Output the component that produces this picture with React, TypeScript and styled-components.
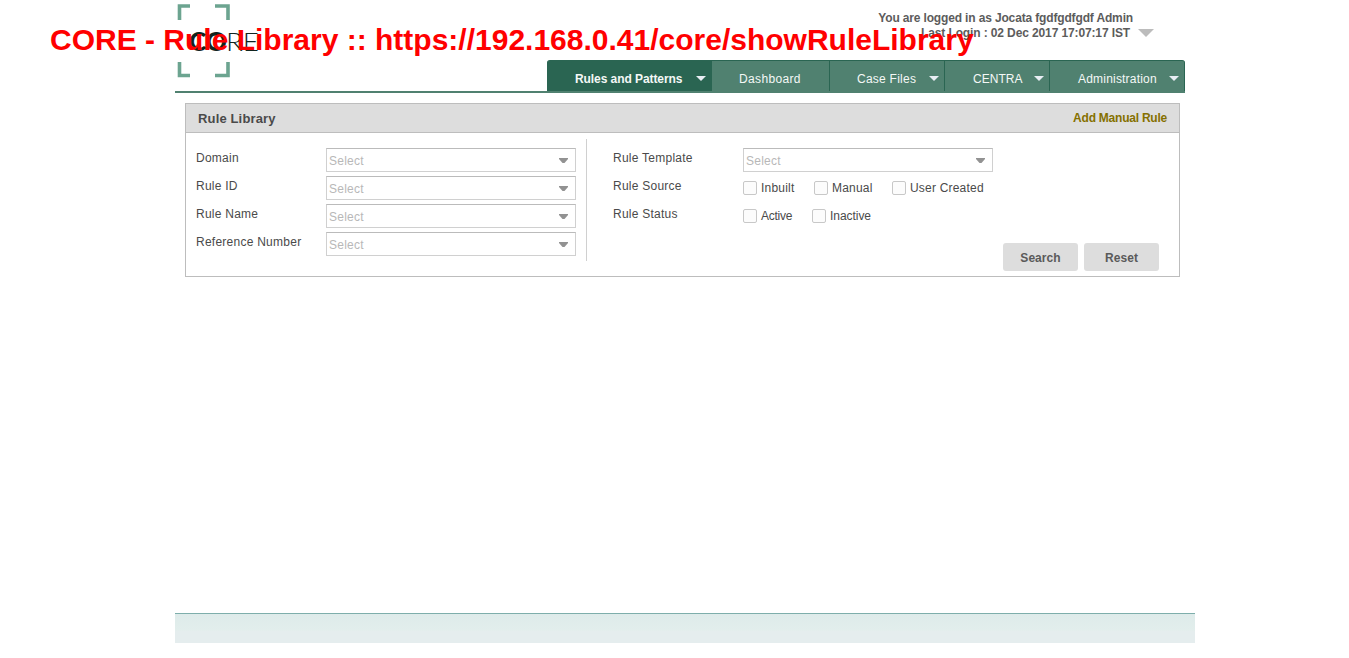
import React from "react";
import styled, { createGlobalStyle } from "styled-components";

const GlobalStyle = createGlobalStyle`
  * { box-sizing: border-box; }
  body { margin: 0; background: #fff; color: #4a4a4a; font: 12px/14px Arial, "Liberation Sans", sans-serif; letter-spacing: 0.25px; }
`;
const Page = styled.div`
  width: 1020px;
  height: 658px;
  margin-left: 175px;
  display: flex;
  flex-direction: column;
`;
const Header = styled.header`
  width: 1010px;
  height: 93px;
  display: flex;
  justify-content: space-between;
  border-bottom: 2px solid #508170;
`;
const Logo = styled.svg`
  display: block;
  width: 90px;
  height: 80px;
`;
const HeaderRight = styled.div`
  width: 638px;
  display: flex;
  flex-direction: column;
  justify-content: space-between;
`;
const UserInfo = styled.div`
  display: flex;
  justify-content: flex-end;
  padding: 11px 31px 0 0;
  font-weight: bold;
  line-height: 15px;
  color: #5c5c5c;
`;
const UserLines = styled.div`
  display: flex;
  flex-direction: column;
  align-items: flex-end;
`;
const UserLine = styled.span<{ $inset?: number; $spacing: number }>`
  white-space: nowrap;
  margin-right: ${(p) => p.$inset ?? 0}px;
  letter-spacing: ${(p) => p.$spacing}px;
`;
const Arrow = styled.span<{ $half: number; $height: number; $color: string }>`
  flex: none;
  width: 0;
  height: 0;
  border: solid transparent;
  border-width: ${(p) => `${p.$height}px ${p.$half}px 0`};
  border-top-color: ${(p) => p.$color};
`;
const UserArrow = styled(Arrow)`
  margin-top: 18px;
`;
const Nav = styled.nav`
  display: flex;
  height: 31px;
  border-top: 1px solid #2a6552;
  border-radius: 3px 3px 0 0;
  background: #508170;
  overflow: hidden;
`;
const Tab = styled.a<{ $width: number; $pad: number; $active?: boolean; $spacing?: number }>`
  display: flex;
  justify-content: space-between;
  align-items: center;
  width: ${(p) => p.$width}px;
  padding: 5px 5px 0 ${(p) => p.$pad}px;
  color: #f4f8f6;
  font-weight: ${(p) => (p.$active ? "bold" : "normal")};
  letter-spacing: ${(p) => p.$spacing ?? 0.25}px;
  background: ${(p) => (p.$active ? "#2a6552" : "transparent")};
  border-right: 1px solid #2a6552;
  white-space: nowrap;
`;
const Panel = styled.section`
  width: 995px;
  height: 174px;
  margin: 10px 0 0 10px;
  border: 1px solid #bdbdbd;
`;
const PanelHeader = styled.div`
  height: 29px;
  display: flex;
  align-items: center;
  justify-content: space-between;
  padding: 0 12px;
  background: #ddd;
  border-bottom: 1px solid #bdbdbd;
`;
const Title = styled.h1`
  margin: 1px 0 0;
  font-size: 13px;
  letter-spacing: 0.15px;
`;
const AddLink = styled.a`
  font-weight: bold;
  color: #857000;
  letter-spacing: -0.23px;
`;
const Form = styled.form`
  display: flex;
  height: 143px;
  padding: 6px 20px 0 10px;
`;
const Column = styled.div`
  display: flex;
  flex-direction: column;
  gap: 4px;
  padding-top: 9px;
`;
const LeftColumn = styled(Column)`
  width: 391px;
  height: 122px;
  border-right: 1px solid #d0d0d0;
`;
const RightColumn = styled(Column)`
  width: 546px;
  margin-left: 26px;
`;
const Row = styled.div`
  display: flex;
  height: 24px;
`;
const Label = styled.label`
  width: 130px;
  padding-top: 3px;
`;
const SelectBox = styled.div`
  width: 250px;
  height: 24px;
  display: flex;
  align-items: center;
  justify-content: space-between;
  padding: 1px 7px 0 2px;
  border: 1px solid #d0d0d0;
  border-top-color: #bbb;
  color: #b8b8b8;
`;
const SelectArrow = styled.svg`
  width: 9px;
  height: 5px;
`;
const Check = styled.label<{ $width: number; $spacing?: number }>`
  display: flex;
  align-items: center;
  gap: 4px;
  width: ${(p) => p.$width}px;
  letter-spacing: ${(p) => p.$spacing ?? 0.2}px;
  white-space: nowrap;
`;
const Box = styled.span`
  flex: none;
  width: 14px;
  height: 14px;
  border: 1px solid #c8c8c8;
  border-radius: 2px;
  background: #fcfcfc;
`;
const Buttons = styled.div`
  display: flex;
  justify-content: flex-end;
  gap: 6px;
  margin-top: 11px;
`;
const Button = styled.button`
  width: 75px;
  height: 28px;
  padding: 1px 0 0;
  border: 0;
  border-radius: 3px;
  background: #ddd;
  color: #5a5a5a;
  font: bold 12px Arial, "Liberation Sans", sans-serif;
  letter-spacing: 0.05px;
`;
const Footer = styled.footer`
  height: 30px;
  margin: auto 0 15px;
  border-top: 1px solid #7eaeab;
  background: linear-gradient(#deebea, #e2eeec 55%, #e5edee 60%);
`;
const Caption = styled.div`
  position: absolute;
  left: 50px;
  top: 22px;
  color: #f00;
  font: bold 30px/35px Arial, "Liberation Sans", sans-serif;
  letter-spacing: 0;
  white-space: nowrap;
`;

const tabs = [
  { name: "Rules and Patterns", width: 165, pad: 28, active: true, arrow: true, spacing: -0.07 },
  { name: "Dashboard", width: 118, pad: 27, spacing: 0.35 },
  { name: "Case Files", width: 115, pad: 27, arrow: true },
  { name: "CENTRA", width: 105, pad: 28, arrow: true, spacing: 0.05 },
  { name: "Administration", width: 135, pad: 28, arrow: true, spacing: 0.2 },
];

const Select = () => (
  <SelectBox>
    <span>Select</span>
    <SelectArrow viewBox="0 0 9 5" aria-hidden="true">
      <path d="M0 0H9V1L5.500 5H3.500L0 1Z" fill="#929292" />
    </SelectArrow>
  </SelectBox>
);

export default function App() {
  return (
    <>
      <GlobalStyle />
      <Page>
        <Header>
          <Logo viewBox="0 0 90 80">
            <path d="M15 6H4.500V20M40 6H53V20M4.500 62V75.500H15M40 75.500H53V62" fill="none" stroke="#6ca490" strokeWidth="3.600" />
            <g fill="#10251f" fontFamily="Lato, sans-serif" fontSize="26" letterSpacing="0">
              <text x="14" y="51" fontWeight="900" textLength="38" lengthAdjust="spacingAndGlyphs">CO</text>
              <text x="51" y="51" fontWeight="300" textLength="33" lengthAdjust="spacingAndGlyphs">RE</text>
            </g>
          </Logo>
          <HeaderRight>
            <UserInfo>
              <UserLines>
                <UserLine $inset={5} $spacing={-0.15}>You are logged in as Jocata fgdfgdfgdf Admin</UserLine>
                <UserLine $inset={8} $spacing={-0.12}>Last Login : 02 Dec 2017 17:07:17 IST</UserLine>
              </UserLines>
              <UserArrow $half={8} $height={8} $color="#bcbcbc" />
            </UserInfo>
            <Nav>
              {tabs.map((t) => (
                <Tab key={t.name} $width={t.width} $pad={t.pad} $active={t.active} $spacing={t.spacing}>
                  {t.name}
                  {t.arrow && <Arrow $half={5} $height={5} $color="#e8eef4" />}
                </Tab>
              ))}
            </Nav>
          </HeaderRight>
        </Header>
        <Panel>
          <PanelHeader>
            <Title>Rule Library</Title>
            <AddLink>Add Manual Rule</AddLink>
          </PanelHeader>
          <Form>
            <LeftColumn>
              {["Domain", "Rule ID", "Rule Name", "Reference Number"].map((n) => (
                <Row key={n}>
                  <Label>{n}</Label>
                  <Select />
                </Row>
              ))}
            </LeftColumn>
            <RightColumn>
              <Row>
                <Label>Rule Template</Label>
                <Select />
              </Row>
              <Row>
                <Label>Rule Source</Label>
                <Check $width={71}><Box />Inbuilt</Check>
                <Check $width={78}><Box />Manual</Check>
                <Check $width={100}><Box />User Created</Check>
              </Row>
              <Row>
                <Label>Rule Status</Label>
                <Check $width={69} $spacing={-0.25}><Box />Active</Check>
                <Check $width={80} $spacing={-0.05}><Box />Inactive</Check>
              </Row>
              <Buttons>
                <Button type="button">Search</Button>
                <Button type="button">Reset</Button>
              </Buttons>
            </RightColumn>
          </Form>
        </Panel>
        <Footer />
      </Page>
      <Caption>CORE - Rule Library :: https://192.168.0.41/core/showRuleLibrary</Caption>
    </>
  );
}
